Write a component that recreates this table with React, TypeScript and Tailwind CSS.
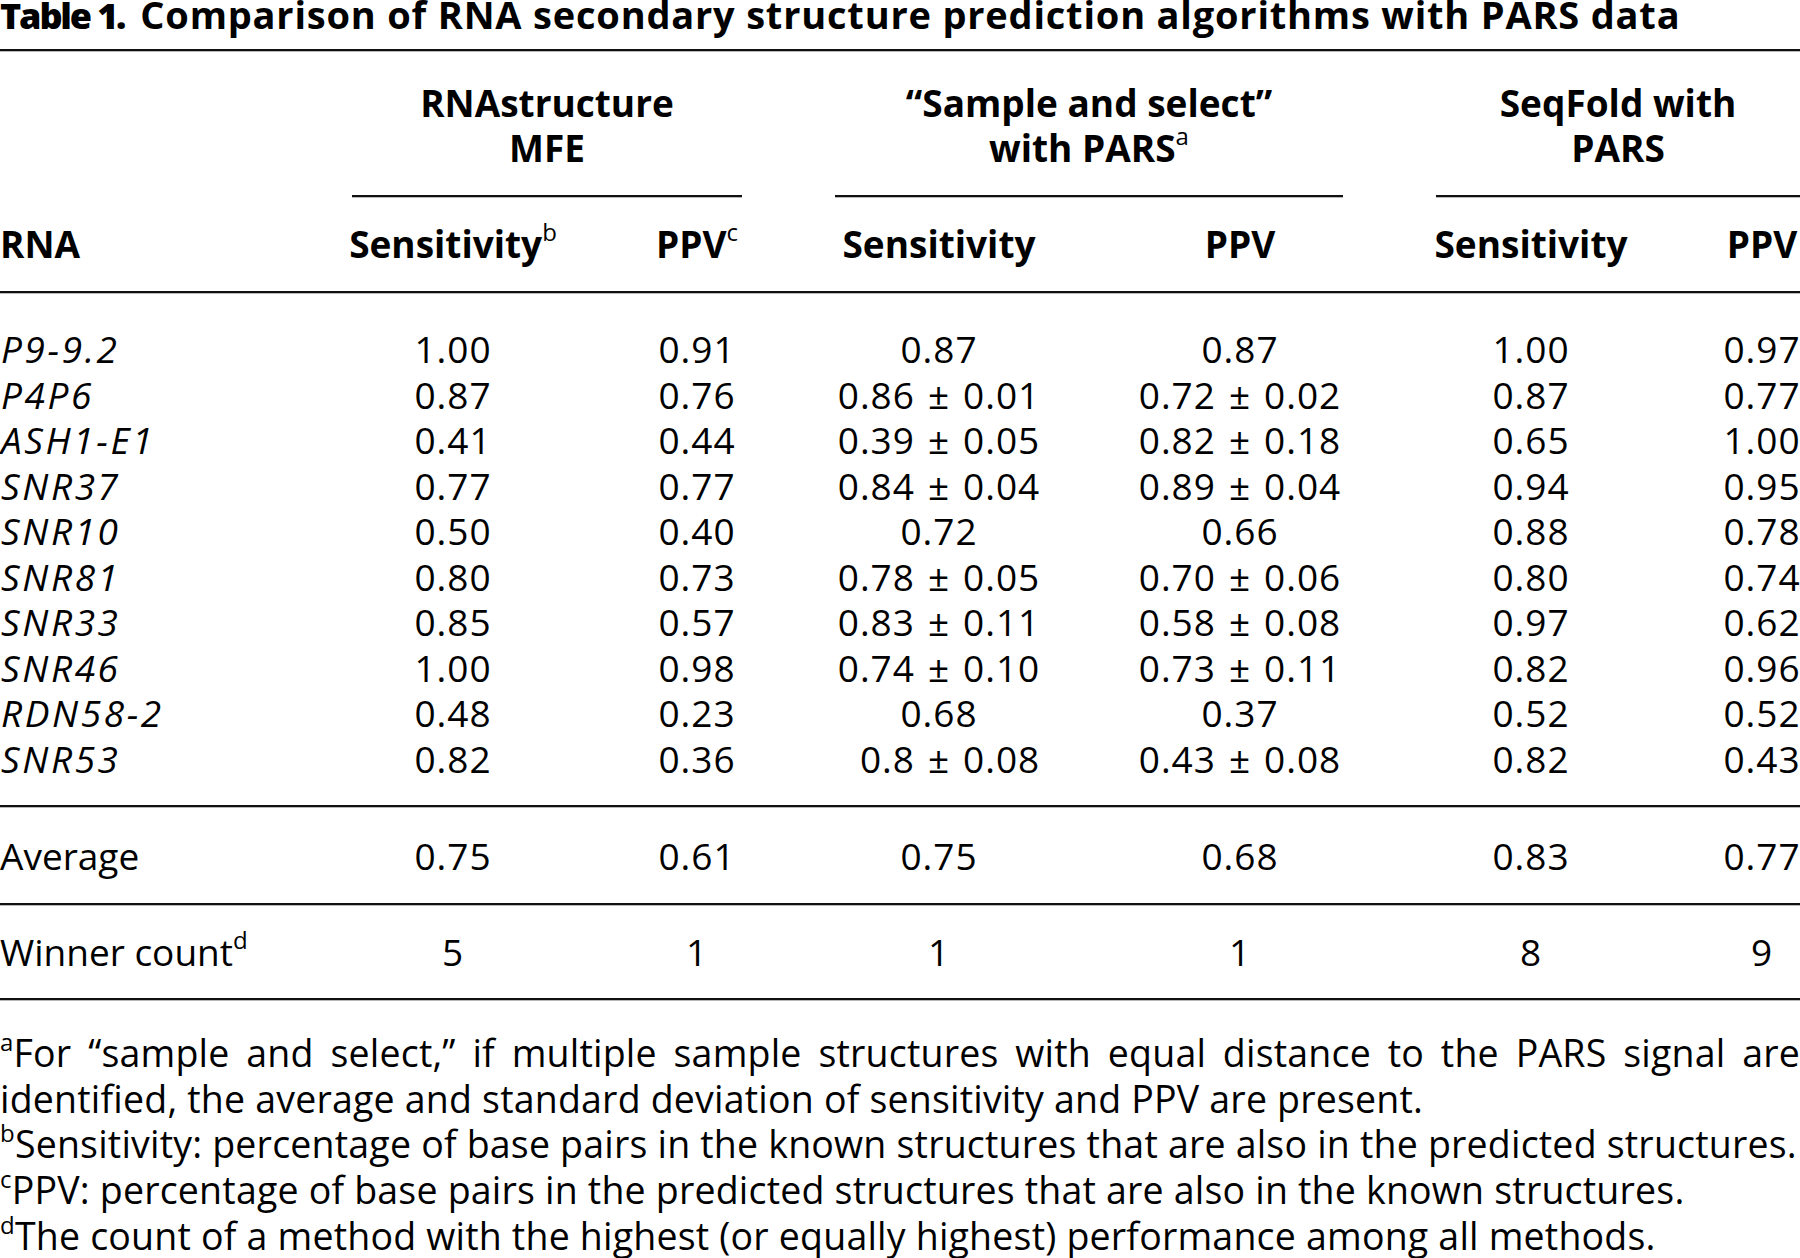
const rows: string[][] = [
  ['P9-9.2', '1.00', '0.91', '0.87', '0.87', '1.00', '0.97'],
  ['P4P6', '0.87', '0.76', '0.86 ± 0.01', '0.72 ± 0.02', '0.87', '0.77'],
  ['ASH1-E1', '0.41', '0.44', '0.39 ± 0.05', '0.82 ± 0.18', '0.65', '1.00'],
  ['SNR37', '0.77', '0.77', '0.84 ± 0.04', '0.89 ± 0.04', '0.94', '0.95'],
  ['SNR10', '0.50', '0.40', '0.72', '0.66', '0.88', '0.78'],
  ['SNR81', '0.80', '0.73', '0.78 ± 0.05', '0.70 ± 0.06', '0.80', '0.74'],
  ['SNR33', '0.85', '0.57', '0.83 ± 0.11', '0.58 ± 0.08', '0.97', '0.62'],
  ['SNR46', '1.00', '0.98', '0.74 ± 0.10', '0.73 ± 0.11', '0.82', '0.96'],
  ['RDN58-2', '0.48', '0.23', '0.68', '0.37', '0.52', '0.52'],
  ['SNR53', '0.82', '0.36', '0.8 ± 0.08', '0.43 ± 0.08', '0.82', '0.43'],
]

// column centres: 453, 697, 939, 1240, 1531, 1762
const COLS = 'grid grid-cols-[330px_246px_242px_242px_360px_222px_240px]'
const GROUPS = 'grid grid-cols-[352px_390px_93px_508px_93px_364px]'

function Rule() {
  return (
    <div>
      <div className="h-[2px] bg-[#111]" />
      <div className="h-px bg-[#b8b8b8]" />
    </div>
  )
}

function Sup({ children }: { children: string }) {
  return <sup className="text-[24px] font-normal -top-[17px]">{children}</sup>
}

function NoteSup({ children }: { children: string }) {
  return <sup className="text-[24px] -top-[16px]">{children}</sup>
}

function Value({ v }: { v: string }) {
  if (!v.includes('±')) return <div className="text-center tracking-[1px]">{v}</div>
  const [a, b] = v.split(' ± ')
  return (
    <div className="flex tracking-[1px]">
      <span className="flex-1 text-right">{a}</span>
      <span className="mx-[13px]">±</span>
      <span className="flex-1 text-left">{b}</span>
    </div>
  )
}

function Row({ cells }: { cells: string[] }) {
  return (
    <div className={`${COLS} h-[45.5px] leading-[45.5px]`}>
      <div className="italic pl-[1px] tracking-[2.6px]">{cells[0]}</div>
      {cells.slice(1).map((c, i) => (
        <Value key={i} v={c} />
      ))}
    </div>
  )
}

export default function App() {
  return (
    <div className="w-[1800px] h-[1258px] overflow-hidden bg-white text-black font-['Open_Sans',sans-serif] text-[37px]">
      <div className="h-[29px] leading-[29px] text-[38px] font-bold whitespace-nowrap">
        <span className="text-[36px] font-extrabold tracking-[-0.06em]">Table 1.</span>
        <span className="ml-[16px] tracking-[0.8px]">
          Comparison of RNA secondary structure prediction algorithms with PARS data
        </span>
      </div>
      <div className="mt-[20px]">
        <Rule />
      </div>

      <div className={`${GROUPS} mt-[28px] font-bold leading-[45px] text-center`}>
        <div />
        <div>
          <div>RNAstructure</div>
          <div>MFE</div>
        </div>
        <div />
        <div>
          <div>“Sample and select”</div>
          <div>
            with PARS<Sup>a</Sup>
          </div>
        </div>
        <div />
        <div>
          <div>SeqFold with</div>
          <div>PARS</div>
        </div>
      </div>

      <div className={`${GROUPS} mt-[25px]`}>
        <div />
        <Rule />
        <div />
        <Rule />
        <div />
        <Rule />
      </div>

      <div className={`${COLS} mt-[23px] h-[45px] leading-[45px] font-bold`}>
        <div>RNA</div>
        <div className="text-center whitespace-nowrap">
          Sensitivity<Sup>b</Sup>
        </div>
        <div className="text-center">
          PPV<Sup>c</Sup>
        </div>
        <div className="text-center">Sensitivity</div>
        <div className="text-center">PPV</div>
        <div className="text-center">Sensitivity</div>
        <div className="text-center">PPV</div>
      </div>

      <div className="mt-[25px]">
        <Rule />
      </div>

      <div className="mt-[32px]">
        {rows.map((r) => (
          <Row key={r[0]} cells={r} />
        ))}
      </div>

      <div className="mt-[24px]">
        <Rule />
      </div>

      <div className={`${COLS} h-[95px] leading-[95px]`}>
        <div>Average</div>
        {['0.75', '0.61', '0.75', '0.68', '0.83', '0.77'].map((v, i) => (
          <Value key={i} v={v} />
        ))}
      </div>
      <Rule />

      <div className={`${COLS} h-[92px] leading-[92px]`}>
        <div className="whitespace-nowrap">
          Winner count<Sup>d</Sup>
        </div>
        {['5', '1', '1', '1', '8', '9'].map((v, i) => (
          <Value key={i} v={v} />
        ))}
      </div>
      <Rule />

      <div className="mt-[29px] text-[37.5px] leading-[45.7px] tracking-[0.2px]">
        <div className="text-justify [text-align-last:justify]">
          <NoteSup>a</NoteSup>For “sample and select,” if multiple sample structures with equal distance to the PARS signal are
        </div>
        <div className="whitespace-nowrap">
          identified, the average and standard deviation of sensitivity and PPV are present.
        </div>
        <div className="whitespace-nowrap">
          <NoteSup>b</NoteSup>Sensitivity: percentage of base pairs in the known structures that are also in the predicted structures.
        </div>
        <div className="whitespace-nowrap">
          <NoteSup>c</NoteSup>PPV: percentage of base pairs in the predicted structures that are also in the known structures.
        </div>
        <div className="whitespace-nowrap">
          <NoteSup>d</NoteSup>The count of a method with the highest (or equally highest) performance among all methods.
        </div>
      </div>
    </div>
  )
}
